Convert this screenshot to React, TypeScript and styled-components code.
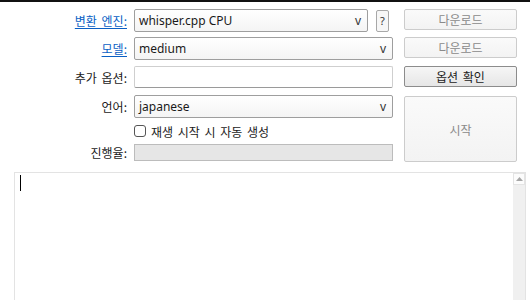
import React from "react";
import styled, { createGlobalStyle } from "styled-components";

const Global = createGlobalStyle`
  html, body { margin: 0; padding: 0; background: #ffffff; }
  body { font-family: "Noto Sans", "Noto Sans CJK KR", sans-serif; font-size: 12px; color: #1a1a1a; }
  * { box-sizing: border-box; }
`;

const Window = styled.div`
  width: 530px;
  height: 300px;
  overflow: hidden;
  border-top: 2px solid #111;
  background: #fff;
  display: flex;
  flex-direction: column;
`;

const Form = styled.div`
  display: grid;
  grid-template-columns: 127px 259px 117px;
  column-gap: 7px;
  grid-template-rows: 28px 29px 29px 23px 26px 17px;
  padding: 7px 0 0 0;
  align-items: start;
`;

const Label = styled.div<{ $link?: boolean }>`
  grid-column: 1;
  justify-self: end;
  font-family: "Noto Sans CJK KR", sans-serif;
  font-size: 12px;
  word-spacing: 2px;
  line-height: 23px;
  white-space: nowrap;
  color: ${(p) => (p.$link ? "#0a5fc4" : "#1a1a1a")};
  text-decoration: ${(p) => (p.$link ? "underline" : "none")};
  text-underline-offset: 2px;
`;

const FieldCell = styled.div`
  grid-column: 2;
  display: flex;
  align-items: center;
  gap: 8px;
`;

const Combo = styled.div`
  flex: 1;
  height: 23px;
  border: 1px solid #9e9e9e;
  border-radius: 2px;
  background: linear-gradient(#ffffff, #f4f4f4);
  display: flex;
  align-items: center;
  justify-content: space-between;
  padding: 0 6px 0 4px;
  font-family: "Noto Sans", sans-serif;
  font-size: 12px;
  color: #1a1a1a;
`;

const Arrow = styled.span`
  font-family: "Noto Sans", sans-serif;
  font-size: 12px;
  color: #333;
`;

const HelpButton = styled.div`
  width: 13px;
  height: 22px;
  border: 1px solid #a8a8a8;
  border-radius: 2px;
  background: #f7f7f7;
  display: flex;
  align-items: center;
  justify-content: center;
  font-size: 11px;
  color: #333;
  margin-right: 4px;
`;

const TextInput = styled.div`
  flex: 1;
  height: 22px;
  border: 1px solid #cfcfcf;
  border-bottom-color: #9a9a9a;
  border-radius: 2px;
  background: #fff;
`;

const CheckRow = styled.label`
  display: flex;
  align-items: center;
  gap: 5px;
  height: 26px;
  font-family: "Noto Sans CJK KR", sans-serif;
  font-size: 12px;
  word-spacing: 2px;
  color: #1a1a1a;
`;

const Box = styled.span`
  width: 12px;
  height: 12px;
  border: 1px solid #555;
  border-radius: 3px;
  background: #fff;
`;

const Progress = styled.div`
  flex: 1;
  height: 17px;
  background: #e6e6e6;
  border: 1px solid #bcbcbc;
`;

const Btn = styled.div<{ $enabled?: boolean; $row: string; $h: number }>`
  grid-column: 3;
  grid-row: ${(p) => p.$row};
  margin-left: 4px;
  margin-top: ${(p) => (p.$h > 30 ? 1 : 0)}px;
  height: ${(p) => p.$h}px;
  border: 1px solid ${(p) => (p.$enabled ? "#8c8c8c" : "#cccccc")};
  border-radius: 2px;
  background: ${(p) =>
    p.$enabled ? "linear-gradient(#f6f6f6, #e6e6e6)" : "linear-gradient(#fafafa, #f3f3f3)"};
  color: ${(p) => (p.$enabled ? "#1a1a1a" : "#8a8a8a")};
  display: flex;
  align-items: center;
  justify-content: center;
  font-family: "Noto Sans CJK KR", sans-serif;
  font-size: 12px;
  word-spacing: 2px;
`;

const LogArea = styled.div`
  margin: 11px 4px 0 14px;
  flex: 1;
  border: 1px solid #e3e3e3;
  border-bottom: none;
  display: flex;
  background: #fff;
`;

const Editor = styled.div`
  flex: 1;
  padding: 2px 0 0 5px;
`;

const Caret = styled.div`
  width: 1px;
  height: 16px;
  background: #000;
`;

const ScrollBar = styled.div`
  width: 12px;
  background: #f0f0f0;
  display: flex;
  flex-direction: column;
`;

const ScrollBtn = styled.div`
  height: 12px;
  border: 1px solid #e4e4e4;
  background: #fcfcfc;
  display: flex;
  align-items: center;
  justify-content: center;
`;

export default function App() {
  return (
    <>
      <Global />
      <Window>
        <Form>
          <Label $link style={{ gridRow: 1 }}>변환 엔진:</Label>
          <FieldCell style={{ gridRow: 1 }}>
            <Combo>
              <span>whisper.cpp CPU</span>
              <Arrow>v</Arrow>
            </Combo>
            <HelpButton>?</HelpButton>
          </FieldCell>
          <Btn $row="1" $h={21}>다운로드</Btn>

          <Label $link style={{ gridRow: 2 }}>모델:</Label>
          <FieldCell style={{ gridRow: 2 }}>
            <Combo>
              <span>medium</span>
              <Arrow>v</Arrow>
            </Combo>
          </FieldCell>
          <Btn $row="2" $h={21}>다운로드</Btn>

          <Label style={{ gridRow: 3 }}>추가 옵션:</Label>
          <FieldCell style={{ gridRow: 3 }}>
            <TextInput />
          </FieldCell>
          <Btn $enabled $row="3" $h={21}>옵션 확인</Btn>

          <Label style={{ gridRow: 4 }}>언어:</Label>
          <FieldCell style={{ gridRow: 4 }}>
            <Combo>
              <span>japanese</span>
              <Arrow>v</Arrow>
            </Combo>
          </FieldCell>
          <Btn $row="4 / 7" $h={66}>시작</Btn>

          <FieldCell style={{ gridRow: 5 }}>
            <CheckRow>
              <Box />
              재생 시작 시 자동 생성
            </CheckRow>
          </FieldCell>

          <Label style={{ gridRow: 6, lineHeight: "17px" }}>진행율:</Label>
          <FieldCell style={{ gridRow: 6 }}>
            <Progress />
          </FieldCell>
        </Form>
        <LogArea>
          <Editor>
            <Caret />
          </Editor>
          <ScrollBar>
            <ScrollBtn>
              <svg width="7" height="4" viewBox="0 0 7 4">
                <polygon points="0,4 7,4 3.5,0" fill="#a6a6a6" />
              </svg>
            </ScrollBtn>
          </ScrollBar>
        </LogArea>
      </Window>
    </>
  );
}
